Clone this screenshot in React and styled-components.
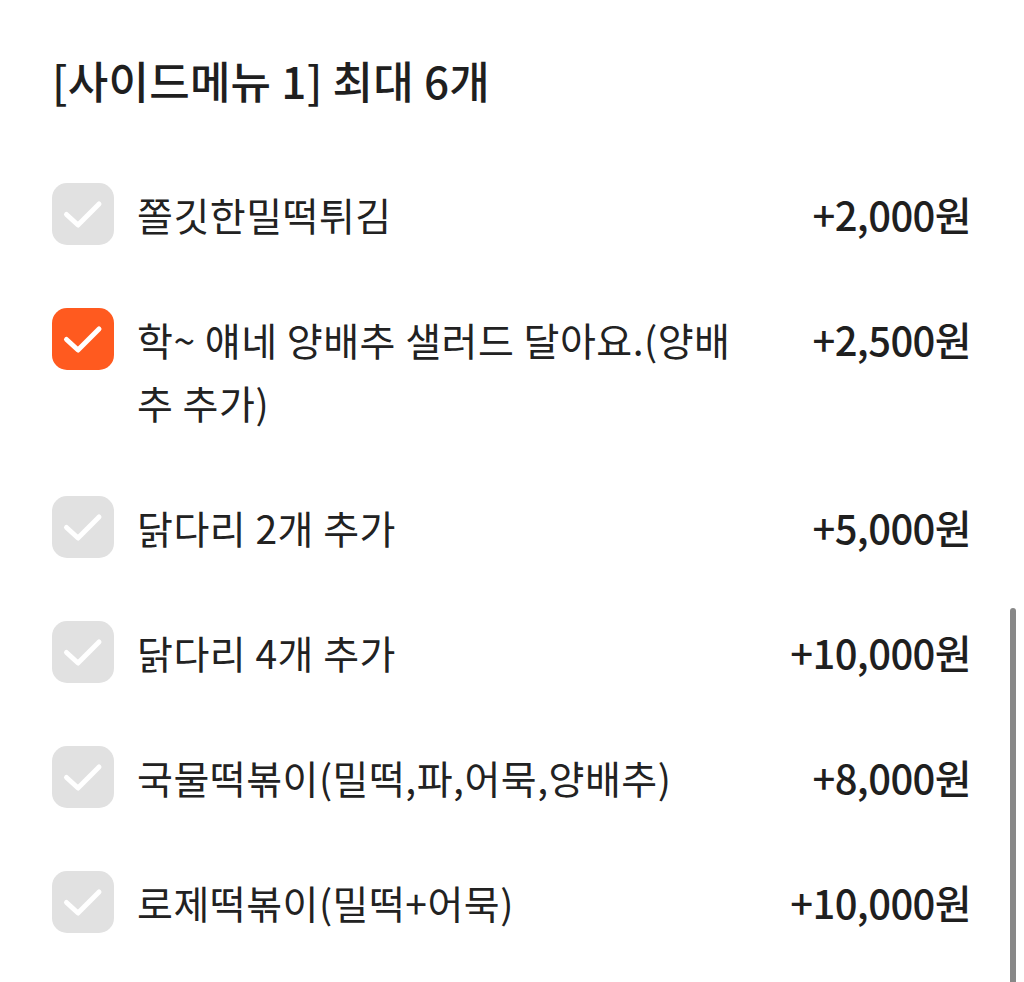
import React from 'react';
import styled, { createGlobalStyle } from 'styled-components';

const GlobalStyle = createGlobalStyle`
  body {
    margin: 0;
    background: #fff;
    font-family: "Noto Sans CJK KR", "Noto Sans", sans-serif;
    color: #222;
  }
`;

const items = [
  { name: '쫄깃한밀떡튀김', price: '+2,000원', checked: false },
  { name: '학~ 얘네 양배추 샐러드 달아요.(양배추 추가)', price: '+2,500원', checked: true },
  { name: '닭다리 2개 추가', price: '+5,000원', checked: false },
  { name: '닭다리 4개 추가', price: '+10,000원', checked: false },
  { name: '국물떡볶이(밀떡,파,어묵,양배추)', price: '+8,000원', checked: false },
  { name: '로제떡볶이(밀떡+어묵)', price: '+10,000원', checked: false },
];

const CheckMark = () => (
  <svg width="62" height="62" viewBox="0 0 62 62" fill="none">
    <polyline
      points="14.5,31.5 26,42 47,21"
      stroke="#fff"
      strokeWidth="5"
      strokeLinecap="round"
      strokeLinejoin="round"
    />
  </svg>
);

const App = () => {
  return (
    <>
      <GlobalStyle />
      <Page>
        <Title>[사이드메뉴 1] 최대 6개</Title>
        <List>
          {items.map((it, i) => (
            <Row key={i}>
              <Box checked={it.checked}>
                <CheckMark />
              </Box>
              <Name>{it.name}</Name>
              <Price>{it.price}</Price>
            </Row>
          ))}
        </List>
        <Scrollbar />
      </Page>
    </>
  );
};

export default App;

const Page = styled.div`
  position: relative;
  height: 982px;
  overflow: hidden;
  padding: 55px 53px 0 52px;
  box-sizing: border-box;
`;

const Title = styled.div`
  font-size: 44px;
  line-height: 50px;
  font-weight: 500;
  color: #1f1f1f;
  letter-spacing: 0.2px;
  margin-bottom: 47px;
`;

const List = styled.div`
  display: flex;
  flex-direction: column;
`;

const Row = styled.div`
  display: flex;
  align-items: flex-start;
  padding: 31px 0;
`;

const Box = styled.div`
  flex: 0 0 62px;
  width: 62px;
  height: 62px;
  border-radius: 15px;
  background: ${p => (p.checked ? '#ff5a1f' : '#e1e1e1')};
  display: flex;
  align-items: center;
  justify-content: center;
`;

const Name = styled.div`
  flex: 0 1 610px;
  margin-left: 23px;
  font-size: 39px;
  line-height: 63px;
  color: #222;
  letter-spacing: 0.5px;
  word-break: break-all;
`;

const Price = styled.div`
  margin-left: auto;
  font-size: 40px;
  line-height: 63px;
  font-weight: 500;
  color: #1f1f1f;
  white-space: nowrap;
  letter-spacing: -0.6px;
`;

const Scrollbar = styled.div`
  position: absolute;
  right: 8px;
  top: 608px;
  width: 6px;
  height: 400px;
  border-radius: 3px;
  background: #888;
`;
